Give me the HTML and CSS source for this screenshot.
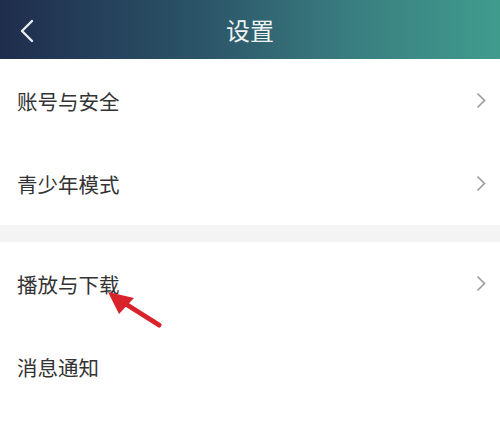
FILE: index.html
```html
<!DOCTYPE html>
<html lang="zh-CN">
<head>
    <meta charset="UTF-8">
    <meta name="viewport" content="width=device-width, initial-scale=1.0">
    <title>设置</title>
    <link rel="stylesheet" href="styles.css">
</head>
<body>
    <div class="page">
        <div class="top-bar">
            <svg class="back-icon" width="16" height="24" viewBox="0 0 16 24">
                <path d="M13 2 L3 12 L13 22" fill="none" stroke="#e8eef0" stroke-width="2.4" stroke-linecap="round" stroke-linejoin="round"/>
            </svg>
            <h1 class="top-title">设置</h1>
        </div>

        <div class="setting-group">
            <div class="setting-row">
                <span class="setting-label">账号与安全</span>
                <svg class="arrow-right" width="10" height="17" viewBox="0 0 10 17"><path d="M1.5 1.5 L8.5 8.5 L1.5 15.5" fill="none" stroke="#9a9a9a" stroke-width="1.6"/></svg>
            </div>
            <div class="setting-row">
                <span class="setting-label">青少年模式</span>
                <svg class="arrow-right" width="10" height="17" viewBox="0 0 10 17"><path d="M1.5 1.5 L8.5 8.5 L1.5 15.5" fill="none" stroke="#9a9a9a" stroke-width="1.6"/></svg>
            </div>
        </div>

        <div class="group-gap"></div>

        <div class="setting-group">
            <div class="setting-row">
                <span class="setting-label">播放与下载</span>
                <svg class="arrow-right" width="10" height="17" viewBox="0 0 10 17"><path d="M1.5 1.5 L8.5 8.5 L1.5 15.5" fill="none" stroke="#9a9a9a" stroke-width="1.6"/></svg>
                <!-- 标注箭头 -->
                <svg class="mark-arrow" width="58" height="42" viewBox="0 0 58 42">
                    <path d="M53 35 L15 11" stroke="#d8232a" stroke-width="5" stroke-linecap="round"/>
                    <path d="M2 2 L28 8 L13 24 Z" fill="#d8232a"/>
                </svg>
            </div>
            <div class="setting-row">
                <span class="setting-label">消息通知</span>
            </div>
        </div>
    </div>
</body>
</html>
```

FILE: styles.css
```css
/* 设置页 */
body {
    margin: 0;
    padding: 0;
    font-family: "Noto Sans CJK SC", "Noto Sans", sans-serif;
    background-color: #fff;
}
.page {
    width: 500px;
    height: 423px;
    overflow: hidden;
}
.top-bar {
    height: 59px;
    display: flex;
    align-items: center;
    justify-content: center;
    position: relative;
    background: linear-gradient(90deg, #1f2d4d 0%, #2b5468 40%, #3a7d80 70%, #409c8d 100%);
}
.back-icon {
    position: absolute;
    left: 19px;
    top: 19px;
}
.top-title {
    margin: 0;
    font-size: 24px;
    font-weight: normal;
    color: #eef3f2;
}
.setting-row {
    height: 83px;
    display: flex;
    align-items: center;
    justify-content: space-between;
    padding: 0 14px 0 17px;
    position: relative;
}
.setting-label {
    font-size: 20.5px;
    color: #333;
}
.group-gap {
    height: 17px;
    background-color: #f4f4f4;
}
.mark-arrow {
    position: absolute;
    left: 106px;
    top: 48px;
}
```
